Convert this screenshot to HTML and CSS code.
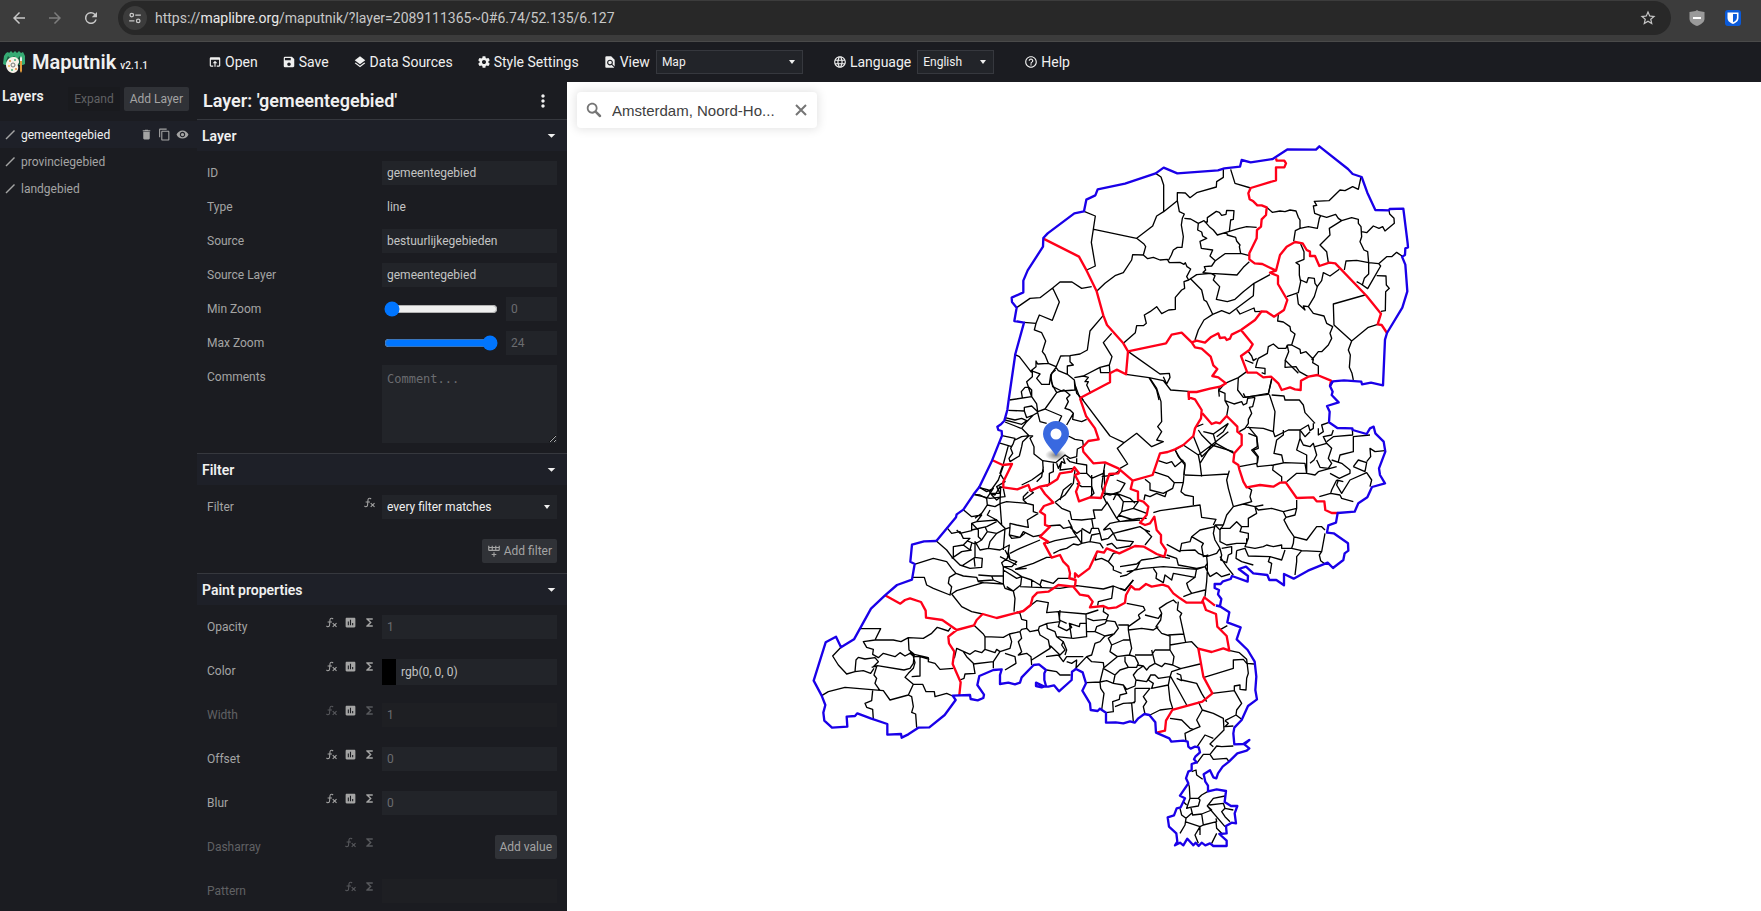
FILE: index.html
```html
<!DOCTYPE html>
<html lang="en">
<head>
    <meta charset="UTF-8">
    <meta name="viewport" content="width=device-width, initial-scale=1.0">
    <title>Maputnik</title>
    <link rel="stylesheet" href="styles.css">
</head>
<body>
    <!-- icon set -->
    <svg class="sprite" aria-hidden="true">
        <symbol id="i-open" viewBox="0 0 24 24"><path d="M19 4H5a2 2 0 0 0-2 2v12a2 2 0 0 0 2 2h4v-2H5V8h14v10h-4v2h4c1.1 0 2-.9 2-2V6a2 2 0 0 0-2-2zm-7 6l-4 4h3v6h2v-6h3l-4-4z"/></symbol>
        <symbol id="i-save" viewBox="0 0 24 24"><path d="M17 3H5a2 2 0 0 0-2 2v14a2 2 0 0 0 2 2h14c1.1 0 2-.9 2-2V7l-4-4zm-5 16c-1.66 0-3-1.34-3-3s1.34-3 3-3 3 1.34 3 3-1.34 3-3 3zm3-10H5V5h10v4z"/></symbol>
        <symbol id="i-layers" viewBox="0 0 24 24"><path d="M11.99 18.54l-7.37-5.73L3 14.07l9 7 9-7-1.63-1.27-7.38 5.74zM12 16l7.36-5.73L21 9l-9-7-9 7 1.63 1.27L12 16z"/></symbol>
        <symbol id="i-settings" viewBox="0 0 24 24"><path d="M19.43 12.98c.04-.32.07-.64.07-.98s-.03-.66-.07-.98l2.11-1.65c.19-.15.24-.42.12-.64l-2-3.46c-.12-.22-.39-.3-.61-.22l-2.49 1c-.52-.4-1.08-.73-1.69-.98l-.38-2.65A.488.488 0 0 0 14 2h-4c-.25 0-.46.18-.49.42l-.38 2.65c-.61.25-1.17.59-1.69.98l-2.49-1c-.23-.09-.49 0-.61.22l-2 3.46c-.13.22-.07.49.12.64l2.11 1.65c-.04.32-.07.65-.07.98s.03.66.07.98l-2.11 1.65c-.19.15-.24.42-.12.64l2 3.46c.12.22.39.3.61.22l2.49-1c.52.4 1.08.73 1.69.98l.38 2.65c.03.24.24.42.49.42h4c.25 0 .46-.18.49-.42l.38-2.65c.61-.25 1.17-.59 1.69-.98l2.49 1c.23.09.49 0 .61-.22l2-3.46c.12-.22.07-.49-.12-.64l-2.11-1.65zM12 15.5c-1.93 0-3.5-1.57-3.5-3.5s1.57-3.5 3.5-3.5 3.5 1.57 3.5 3.5-1.57 3.5-3.5 3.5z"/></symbol>
        <symbol id="i-view" viewBox="0 0 24 24"><path d="M20 19.59V8l-6-6H6a2 2 0 0 0-1.99 2L4 20c0 1.1.89 2 1.99 2H18c.45 0 .85-.15 1.19-.4l-4.43-4.43c-.8.52-1.74.83-2.76.83-2.76 0-5-2.24-5-5s2.24-5 5-5 5 2.24 5 5c0 1.02-.31 1.96-.83 2.75L20 19.59zM9 13c0 1.66 1.34 3 3 3s3-1.34 3-3-1.34-3-3-3-3 1.34-3 3z"/></symbol>
        <symbol id="i-language" viewBox="0 0 24 24"><path d="M11.99 2C6.47 2 2 6.48 2 12s4.47 10 9.99 10C17.52 22 22 17.52 22 12S17.52 2 11.99 2zm6.93 6h-2.95a15.65 15.65 0 0 0-1.38-3.56A8.03 8.03 0 0 1 18.92 8zM12 4.04c.83 1.2 1.48 2.53 1.91 3.96h-3.82c.43-1.43 1.08-2.76 1.91-3.96zM4.26 14C4.1 13.36 4 12.69 4 12s.1-1.36.26-2h3.38c-.08.66-.14 1.32-.14 2s.06 1.34.14 2H4.26zm.82 2h2.95c.32 1.25.78 2.45 1.38 3.56A7.987 7.987 0 0 1 5.08 16zm2.95-8H5.08a7.987 7.987 0 0 1 4.33-3.56A15.65 15.65 0 0 0 8.03 8zM12 19.96c-.83-1.2-1.48-2.53-1.91-3.96h3.82c-.43 1.43-1.08 2.76-1.91 3.96zM14.34 14H9.66c-.09-.66-.16-1.32-.16-2s.07-1.35.16-2h4.68c.09.65.16 1.32.16 2s-.07 1.34-.16 2zm.25 5.56c.6-1.11 1.06-2.31 1.38-3.56h2.95a8.03 8.03 0 0 1-4.33 3.56zM16.36 14c.08-.66.14-1.32.14-2s-.06-1.34-.14-2h3.38c.16.64.26 1.31.26 2s-.1 1.36-.26 2h-3.38z"/></symbol>
        <symbol id="i-help" viewBox="0 0 24 24"><path d="M11 18h2v-2h-2v2zm1-16C6.48 2 2 6.48 2 12s4.48 10 10 10 10-4.48 10-10S17.52 2 12 2zm0 18c-4.41 0-8-3.59-8-8s3.59-8 8-8 8 3.59 8 8-3.59 8-8 8zm0-14c-2.21 0-4 1.79-4 4h2c0-1.1.9-2 2-2s2 .9 2 2c0 2-3 1.75-3 5h2c0-2.25 3-2.5 3-5 0-2.21-1.79-4-4-4z"/></symbol>
        <symbol id="i-delete" viewBox="0 0 24 24"><path d="M6 19c0 1.1.9 2 2 2h8c1.1 0 2-.9 2-2V7H6v12zM19 4h-3.5l-1-1h-5l-1 1H5v2h14V4z"/></symbol>
        <symbol id="i-copy" viewBox="0 0 24 24"><path d="M16 1H4c-1.1 0-2 .9-2 2v14h2V3h12V1zm3 4H8c-1.1 0-2 .9-2 2v14c0 1.1.9 2 2 2h11c1.1 0 2-.9 2-2V7c0-1.1-.9-2-2-2zm0 16H8V7h11v14z"/></symbol>
        <symbol id="i-eye" viewBox="0 0 24 24"><path d="M12 4.5C7 4.5 2.73 7.61 1 12c1.73 4.39 6 7.5 11 7.5s9.27-3.11 11-7.5c-1.73-4.39-6-7.5-11-7.5zM12 17c-2.76 0-5-2.24-5-5s2.24-5 5-5 5 2.24 5 5-2.24 5-5 5zm0-8c-1.66 0-3 1.34-3 3s1.34 3 3 3 3-1.34 3-3-1.34-3-3-3z"/></symbol>
        <symbol id="i-line" viewBox="0 0 24 24"><path d="M3 19L20 2l2 2L5 21z"/></symbol>
        <symbol id="i-more" viewBox="0 0 24 24"><path d="M12 8c1.1 0 2-.9 2-2s-.9-2-2-2-2 .9-2 2 .9 2 2 2zm0 2c-1.1 0-2 .9-2 2s.9 2 2 2 2-.9 2-2-.9-2-2-2zm0 6c-1.1 0-2 .9-2 2s.9 2 2 2 2-.9 2-2-.9-2-2-2z"/></symbol>
        <symbol id="i-down" viewBox="0 0 24 24"><path d="M5 9l7 7 7-7z"/></symbol>
        <symbol id="i-chart" viewBox="0 0 24 24"><path d="M19 3H5c-1.1 0-2 .9-2 2v14c0 1.1.9 2 2 2h14c1.1 0 2-.9 2-2V5c0-1.1-.9-2-2-2zM9 17H7v-7h2v7zm4 0h-2V7h2v10zm4 0h-2v-4h2v4z"/></symbol>
        <symbol id="i-sigma" viewBox="0 0 24 24"><path d="M18 4H6v2l6.5 6L6 18v2h12v-3h-7l5-5-5-5h7z"/></symbol>
        <symbol id="i-fx" viewBox="0 0 24 24"><path d="M12.42 5.29C11.32 5.19 10.35 6 10.25 7.11L10 10H12.82V12H9.82L9.38 17.07C9.18 19.27 7.24 20.9 5.04 20.7C3.79 20.59 2.66 19.9 2 18.83L3.5 17.33C3.83 18.38 4.96 18.97 6 18.63C6.78 18.39 7.33 17.7 7.4 16.89L7.82 12H4.82V10H8L8.27 6.93C8.46 4.73 10.39 3.1 12.6 3.28C13.86 3.39 15 4.09 15.66 5.17L14.16 6.67C13.91 5.9 13.23 5.36 12.42 5.29M22 13.65L20.59 12.24L17.76 15.07L14.93 12.24L13.5 13.65L16.35 16.5L13.5 19.31L14.93 20.72L17.76 17.89L20.59 20.72L22 19.31L19.17 16.5L22 13.65Z"/></symbol>
        <symbol id="i-addrow" viewBox="0 0 24 24"><path d="M22 10A2 2 0 0 1 20 12H4A2 2 0 0 1 2 10V3H4V5H8V3H10V5H14V3H16V5H20V3H22V10M4 10H8V7H4V10M10 10H14V7H10V10M20 10V7H16V10H20M11 14H13V17H16V19H13V22H11V19H8V17H11V14Z"/></symbol>
    </svg>

    <div class="browser-bar">
        <button class="nav-btn" type="button" aria-label="Back">
            <svg class="icon-nav" viewBox="0 0 24 24"><path d="M20 11H7.8l5.6-5.6L12 4l-8 8 8 8 1.4-1.4L7.8 13H20z"/></svg>
        </button>
        <button class="nav-btn nav-btn-off" type="button" aria-label="Forward" disabled>
            <svg class="icon-nav" viewBox="0 0 24 24"><path d="M4 11h12.2l-5.6-5.6L12 4l8 8-8 8-1.4-1.4 5.6-5.6H4z"/></svg>
        </button>
        <button class="nav-btn" type="button" aria-label="Reload">
            <svg class="icon-nav" viewBox="0 0 24 24"><path d="M17.65 6.35A8 8 0 1 0 19.73 14h-2.08A6 6 0 1 1 12 6c1.66 0 3.14.69 4.22 1.78L13 11h7V4z"/></svg>
        </button>
        <div class="url-bar">
            <button class="site-info" type="button" aria-label="Site information">
                <svg class="icon-site" viewBox="0 0 24 24"><g fill="none" stroke="currentColor" stroke-width="2.2"><circle cx="6.5" cy="7" r="3"/><path d="M12.5 7H22M2 17h9"/><circle cx="17.5" cy="17" r="3"/></g></svg>
            </button>
            <span class="url">https://<b>maplibre.org</b>/maputnik/?layer=2089111365~0#6.74/52.135/6.127</span>
            <button class="star" type="button" aria-label="Bookmark">
                <svg class="icon-star" viewBox="0 0 24 24"><path d="M22 9.24l-7.19-.62L12 2 9.19 8.63 2 9.24l5.46 4.73L5.82 21 12 17.27 18.18 21l-1.63-7.03L22 9.24zM12 15.4l-3.76 2.27 1-4.28-3.32-2.88 4.38-.38L12 6.1l1.71 4.04 4.38.38-3.32 2.88 1 4.28L12 15.4z"/></svg>
            </button>
        </div>
        <svg class="ext" viewBox="0 0 16 16"><path fill="#9a9a9a" d="M8 0l1.5 1 6 1v7c0 3-3.5 5.5-7.5 7C4 14.5.5 12 .5 9V2l6-1z"/><path fill="#fff" d="M4 7h8v2H4z"/></svg>
        <svg class="ext" viewBox="0 0 16 16"><rect width="16" height="16" rx="3" fill="#0a5ad9"/><path fill="#fff" d="M2.500 2.500h11V8c0 3-2.500 4.800-5.500 6-3-1.200-5.500-3-5.500-6z"/><path fill="#0a5ad9" d="M8 4v8.300c2.200-1 3.900-2.300 3.900-4.300V4z"/></svg>
    </div>

    <header class="toolbar">
        <a class="brand" href="#">
            <svg class="logo" viewBox="0 0 22 22">
                <path fill="#36ab74" d="M1 5l2-3 2-1 1 1 2-2 2 2 2-2 2 2 2-2 2 2 2-1 2 4v8l-2 1H2l-2-1z"/>
                <path fill="#1b5b40" d="M3 10l2-5 3 3 3-3 3 3 3-3 1 6-2 3H5z"/>
                <path fill="#f6f1e8" d="M10 6c4 0 6 2 6 5 0 2-2 2-1 4 1 3-1 7-5 7s-7-4-7-8 3-8 7-8z"/>
                <circle cx="10" cy="14" r="2" fill="none" stroke="#777"/>
                <circle cx="7" cy="10" r="1" fill="#e8873a"/><circle cx="12" cy="9" r="1" fill="#45b37b"/>
                <circle cx="6" cy="15" r="1" fill="#f0b64a"/><circle cx="9" cy="19" r="1" fill="#45b37b"/><circle cx="13" cy="18" r="1" fill="#e8873a"/>
                <path fill="#e39a3b" d="M17 10h2v10l-1 2-1-2z"/><path fill="#eee" d="M17 7l1-2 1 2v3h-2z"/>
            </svg>
            <span class="brand-name">Maputnik</span>
            <span class="version">v2.1.1</span>
        </a>
        <nav class="actions">
            <button class="action" type="button"><svg class="icon"><use href="#i-open"/></svg>Open</button>
            <button class="action" type="button"><svg class="icon"><use href="#i-save"/></svg>Save</button>
            <button class="action" type="button"><svg class="icon"><use href="#i-layers"/></svg>Data Sources</button>
            <button class="action" type="button"><svg class="icon"><use href="#i-settings"/></svg>Style Settings</button>
            <div class="action action-select">
                <label for="view"><svg class="icon"><use href="#i-view"/></svg>View</label>
                <select id="view" class="select select-view"><option>Map</option></select>
            </div>
            <div class="action action-select">
                <label for="language"><svg class="icon"><use href="#i-language"/></svg>Language</label>
                <select id="language" class="select select-language"><option>English</option></select>
            </div>
            <a class="action action-help" href="#"><svg class="icon"><use href="#i-help"/></svg>Help</a>
        </nav>
    </header>

    <main class="workspace">
        <aside class="layer-list">
            <div class="layer-list-head">
                <h2>Layers</h2>
                <button class="btn btn-faint" type="button">Expand</button>
                <button class="btn" type="button">Add Layer</button>
            </div>
            <ul class="layers">
                <li class="layer layer-selected">
                    <svg class="icon-line"><use href="#i-line"/></svg>
                    <span class="layer-name">gemeentegebied</span>
                    <button type="button" class="layer-btn" aria-label="Delete"><svg class="icon-layer"><use href="#i-delete"/></svg></button>
                    <button type="button" class="layer-btn" aria-label="Duplicate"><svg class="icon-layer"><use href="#i-copy"/></svg></button>
                    <button type="button" class="layer-btn" aria-label="Hide"><svg class="icon-layer"><use href="#i-eye"/></svg></button>
                </li>
                <li class="layer"><svg class="icon-line"><use href="#i-line"/></svg><span class="layer-name">provinciegebied</span></li>
                <li class="layer"><svg class="icon-line"><use href="#i-line"/></svg><span class="layer-name">landgebied</span></li>
            </ul>
        </aside>

        <section class="editor">
            <div class="editor-head">
                <h1>Layer: 'gemeentegebied'</h1>
                <button class="more" type="button" aria-label="More"><svg class="icon-more"><use href="#i-more"/></svg></button>
            </div>

            <button class="group-head" type="button">Layer<svg class="icon-down"><use href="#i-down"/></svg></button>
            <div class="group">
                <div class="row"><label for="id">ID</label><input id="id" class="input" type="text" value="gemeentegebied"></div>
                <div class="row"><span class="label">Type</span><span class="static">line</span></div>
                <div class="row"><label for="source">Source</label><input id="source" class="input" type="text" value="bestuurlijkegebieden"></div>
                <div class="row"><label for="source-layer">Source Layer</label><input id="source-layer" class="input" type="text" value="gemeentegebied"></div>
                <div class="row"><label for="min-zoom">Min Zoom</label>
                    <div class="zoom">
                        <input id="min-zoom" type="range" min="0" max="24" value="0">
                        <input class="input" type="text" placeholder="0" aria-label="Min zoom value">
                    </div>
                </div>
                <div class="row"><label for="max-zoom">Max Zoom</label>
                    <div class="zoom">
                        <input id="max-zoom" type="range" min="0" max="24" value="24">
                        <input class="input" type="text" placeholder="24" aria-label="Max zoom value">
                    </div>
                </div>
                <div class="row"><label for="comments">Comments</label><textarea id="comments" class="input textarea" placeholder="Comment..."></textarea></div>
            </div>

            <button class="group-head" type="button">Filter<svg class="icon-down"><use href="#i-down"/></svg></button>
            <div class="group group-filter">
                <div class="row">
                    <label for="filter">Filter</label>
                    <div class="tools"><button type="button" aria-label="Expression"><svg class="icon-tool"><use href="#i-fx"/></svg></button></div>
                    <select id="filter" class="input select select-filter"><option>every filter matches</option></select>
                </div>
                <button class="btn btn-right" type="button"><svg class="icon-add"><use href="#i-addrow"/></svg>Add filter</button>
            </div>

            <button class="group-head" type="button">Paint properties<svg class="icon-down"><use href="#i-down"/></svg></button>
            <div class="group group-paint">
                <div class="row">
                    <label for="opacity">Opacity</label>
                    <div class="tools">
                        <button type="button" aria-label="Zoom function"><svg class="icon-tool"><use href="#i-fx"/></svg></button>
                        <button type="button" aria-label="Data function"><svg class="icon-tool"><use href="#i-chart"/></svg></button>
                        <button type="button" aria-label="Expression"><svg class="icon-tool"><use href="#i-sigma"/></svg></button>
                    </div>
                    <input id="opacity" class="input" type="text" placeholder="1">
                </div>
                <div class="row">
                    <label for="color">Color</label>
                    <div class="tools">
                        <button type="button" aria-label="Zoom function"><svg class="icon-tool"><use href="#i-fx"/></svg></button>
                        <button type="button" aria-label="Data function"><svg class="icon-tool"><use href="#i-chart"/></svg></button>
                        <button type="button" aria-label="Expression"><svg class="icon-tool"><use href="#i-sigma"/></svg></button>
                    </div>
                    <div class="color-field"><span class="swatch"></span><input id="color" class="input" type="text" value="rgb(0, 0, 0)"></div>
                </div>
                <div class="row row-off">
                    <label for="width">Width</label>
                    <div class="tools">
                        <button type="button" aria-label="Zoom function"><svg class="icon-tool"><use href="#i-fx"/></svg></button>
                        <button type="button" class="tool-on" aria-label="Data function"><svg class="icon-tool"><use href="#i-chart"/></svg></button>
                        <button type="button" aria-label="Expression"><svg class="icon-tool"><use href="#i-sigma"/></svg></button>
                    </div>
                    <input id="width" class="input" type="text" placeholder="1">
                </div>
                <div class="row">
                    <label for="offset">Offset</label>
                    <div class="tools">
                        <button type="button" aria-label="Zoom function"><svg class="icon-tool"><use href="#i-fx"/></svg></button>
                        <button type="button" aria-label="Data function"><svg class="icon-tool"><use href="#i-chart"/></svg></button>
                        <button type="button" aria-label="Expression"><svg class="icon-tool"><use href="#i-sigma"/></svg></button>
                    </div>
                    <input id="offset" class="input" type="text" placeholder="0">
                </div>
                <div class="row">
                    <label for="blur">Blur</label>
                    <div class="tools">
                        <button type="button" aria-label="Zoom function"><svg class="icon-tool"><use href="#i-fx"/></svg></button>
                        <button type="button" aria-label="Data function"><svg class="icon-tool"><use href="#i-chart"/></svg></button>
                        <button type="button" aria-label="Expression"><svg class="icon-tool"><use href="#i-sigma"/></svg></button>
                    </div>
                    <input id="blur" class="input" type="text" placeholder="0">
                </div>
                <div class="row row-off">
                    <span class="label">Dasharray</span>
                    <div class="tools">
                        <button type="button" aria-label="Zoom function"><svg class="icon-tool"><use href="#i-fx"/></svg></button>
                        <button type="button" aria-label="Expression"><svg class="icon-tool"><use href="#i-sigma"/></svg></button>
                    </div>
                    <div class="field"><button class="btn btn-right" type="button">Add value</button></div>
                </div>
                <div class="row row-off">
                    <label for="pattern">Pattern</label>
                    <div class="tools">
                        <button type="button" aria-label="Zoom function"><svg class="icon-tool"><use href="#i-fx"/></svg></button>
                        <button type="button" aria-label="Expression"><svg class="icon-tool"><use href="#i-sigma"/></svg></button>
                    </div>
                    <input id="pattern" class="input" type="text">
                </div>
            </div>
        </section>

        <section class="map">
            <svg class="map-canvas" viewBox="567 82 1194 829" role="img" aria-label="Map of the Netherlands">
                <defs>
                    <radialGradient id="shadow"><stop offset="0" stop-opacity=".5"/><stop offset="1" stop-opacity="0"/></radialGradient>
                </defs>
                <!-- municipalities -->
                <g class="gemeente">
                    <path transform="translate(980 130) scale(.33333)" d="M527 130L543 141 551 165 551 245 530 258 518 288 470 325 342 298M551 245L592 212 592 188 616 189 630 203 650 188 709 171 710 155 730 142 730 115M312 244L346 258 334 337 346 408 320 420M592 212L598 245 613 252 607 265 604 285 610 320 606 352 592 352 580 360 574 375 566 390M470 325L492 342 497 350 490 375 458 374 455 390 430 428 405 437 375 460 350 484M490 375L503 386 520 382 540 390 562 388 568 398 600 397 612 403 616 398 621 410 632 417 620 440 626 450 612 455 614 475 605 480 586 502 586 538 566 540 545 551 530 530 510 545 493 555 499 580 490 587 470 587 466 608 430 640M613 265L632 267 655 280 653 300 665 306 668 318 680 325 660 334 664 355 698 360 690 378 706 392 695 408 673 410 677 420 668 428M655 280L672 272 688 290 700 300 712 315 748 304 775 296 800 290 830 292M672 275L682 276 682 263 709 244 718 247 725 256 738 253 740 241 762 242 760 268 752 270 748 304M740 306L742 315 767 322 770 333 780 345 778 350 782 370 808 377M706 392L735 371 782 370M668 428L693 430 771 435 790 412 808 395M626 450L650 434 693 430 705 437 700 450 719 470 709 508 742 515 765 508 790 485 822 460 870 434M822 460L820 497 790 520 748 551 725 542 698 553 672 570 655 600 645 630M630 445L665 480 672 510 680 515 698 553M770 538L780 552 822 534 825 545 845 544M752 118L765 160 812 174M860 232L877 247 900 243 915 245 930 240 948 243 955 262 960 270 960 295 985 290 1012 295 1018 265 1022 257 1004 250 1000 228 1010 226 1003 214 1047 212 1080 180 1095 182 1118 170 1135 178 1143 141M960 295L946 302 941 334M1022 257L1040 262 1067 253 1075 265 1085 272 1115 263 1135 268 1135 280 1143 290 1145 320 1140 335 1152 360 1163 365 1166 398M1085 272L1048 295 1050 315 1020 345 1040 365 1045 398M1145 305L1160 308 1180 288 1197 295 1208 290 1215 303 1243 280 1242 265 1229 252 1227 241M1166 398L1196 401 1220 380 1235 380 1250 367 1266 378M1093 420L1098 393 1130 391 1166 398 1166 432 1153 445 1147 465M1196 401L1202 408 1175 455 1163 476 1143 462 1130 455M1190 437L1218 438 1219 465 1228 475 1217 485 1216 542 1203 544M962 342L972 365 972 388 948 398 958 405 958 435 962 455 955 488 920 500M962 450L980 458 985 443 1003 445 1005 460 1012 470 1003 500 985 530 970 528 975 540 955 522 951 490M1078 418L1050 438 1030 428 1025 452 1010 472M1155 495L1060 522 1062 585 1115 633 1165 592 1193 583M985 530L1000 550 1032 558 1040 580 1058 590 1050 610 1055 625 1045 645 1025 665 1015 665 995 690M895 555L893 573 910 576 930 590 932 602 945 612 935 645 922 645M1115 633L1105 660 1111 675 1108 712 1116 730 1120 750M922 645L918 655 895 655 880 642 865 650 862 670 835 685 830 700 827 712 855 715 855 732 845 728M922 648L926 665 916 690 915 712 948 710 958 725 985 740M935 645L960 658 962 670 978 665 1000 688 998 698 1015 708 1015 735M805 665L815 678 820 692 830 685M444 664L540 732 568 730 570 742 560 762 550 740M438 733L507 743 550 752 572 780 626 784M507 743L530 780 537 810M718 800L716 782 735 760 775 743 800 725M775 743L773 780 790 802 865 793 875 745M103 673L118 680 132 698 155 728M110 533L150 505 180 503 218 474 240 456 276 456 305 475 335 470M218 474L238 516 217 571 178 555 168 580 132 577M168 580L163 600 185 608 197 633 187 665 195 675 205 700 228 710M370 556L330 603 322 660 300 672 270 677 242 678 228 712M395 610L370 638 396 680 388 705 390 730M205 700L173 702 168 693 168 710 153 722 180 732 170 745 185 763 208 763 212 735 228 712M270 677L270 695 280 705 262 708 262 733 235 722 228 712M212 735L218 770 245 783 285 780 283 750 262 733M283 743L310 738 360 712 388 705M360 712L362 728 390 728M310 738L325 742 315 755 325 755 320 765 332 790M283 750L290 790 310 810"/>
                    <path transform="translate(890 330) scale(.33333)" d="M427 120L427 140 410 155 415 170 425 180 425 200 440 222 443 245 465 237 500 188M397 203L394 185 405 172 415 172 425 200 358 210M355 241L403 243 403 232 425 228 443 245M403 243L410 263 430 255 443 248 450 275 470 280M465 237L515 258 505 280M345 263L375 270 395 265 410 272 395 283 345 270M345 276L393 295M430 255L410 275 395 295 417 317 428 318 420 325 432 350 432 372 458 392 497 398 525 375 540 385 560 380 562 357 580 348 578 332 555 328 535 318M336 317L375 325 370 340 362 355 368 370 357 385 360 395 388 378 395 350 398 335 417 317M417 317L395 320 375 330M325 338L355 347 340 402M355 347L365 350M500 188L522 180 540 195 530 205 535 215 525 235 540 240 550 250 530 285M555 165L570 205M550 250L548 268 575 275 590 268M458 392L460 425 425 450 395 465M460 410L455 440 440 455M490 400L490 425 478 430 478 460 470 470M500 400L505 415 515 395 525 400 520 385M530 385L540 395 560 400 560 385M515 395L510 420 550 415M560 400L590 405 590 430 560 430M590 430L605 445 640 430 645 400M605 435L605 470 612 490 600 500M545 460L520 480 510 510M640 430L635 470 640 490 660 495 690 485 705 460 680 450M690 420L670 435 635 440M340 402L330 430 345 455 320 470 330 490 300 490 310 475 290 485 265 470M342 402L325 450 300 485M250 493L300 505 345 500 340 475M415 485L400 500 400 510M500 188L490 170 482 150 485 130 497 120"/>
                    <path transform="translate(900 470) scale(.33333)" d="M43 283L100 265 140 275 155 295 168 310 148 322 145 340 155 350 150 375 100 355 80 345 73 322 37 322M168 310L190 318 230 322 235 335 250 338 210 350 170 362 155 372 185 410 215 425 248 432M250 338L310 342 315 355 340 363 345 385 342 425M235 315L275 318 280 330 235 333M275 318L310 318 310 342 280 330M310 318L310 290 335 300 365 320 362 345 340 363 320 350M310 300L350 325 365 320 395 330 395 350M395 330L420 345 425 330 460 340 475 325 500 325 520 325M420 345L425 352M360 350L480 355 530 347 610 357 640 348 675 362 700 330M640 348L635 385 595 395 593 407M310 290L305 278 322 265 325 245 330 268 350 275 335 290 310 290M300 260L350 285M315 240L330 268M345 298L400 280 440 262 460 262M345 298L380 295M109 213L140 240 155 260 180 285 210 295 245 292 247 265 225 262 225 215 240 240 265 235 300 240 328 225 325 245M155 265L185 245 215 240M225 262L185 288M222 262L225 290M140 172L155 190 180 185 190 205 210 205 190 225 160 230 160 260M190 119L215 140 245 135 230 155 215 160 215 182 180 190 170 180M215 160L235 180 235 200 245 210 225 222 200 212M190 225L210 240 215 220M221 73L240 75 260 85 270 70 285 75 300 50 310 52M236 52L265 60 275 75M260 85L262 105 245 130 225 145M262 105L285 110 302 100M275 75L290 90 302 80M302 50L300 100 305 165 315 175 310 240M302 100L320 95 380 100 370 90 400 68 387 60M230 155L290 150 305 165M215 180L260 170 290 155M270 120L262 135 290 150M265 235L270 215 290 190 313 178 330 172 330 160 350 165 385 172 382 150 415 130M290 190L262 185 245 210M262 185L255 170M330 172L328 195 360 202 370 185 400 200 425 195M328 195L335 205 360 202 375 190M330 250L360 235 420 210M380 100L400 105 400 125 415 130M465 97L495 75 520 40 525 0M465 97L485 115 510 125 515 148 545 150 585 145 580 120 605 120 620 100 610 80 620 70 655 75 670 95 665 125 650 145 632 115 620 95M440 168L480 165 490 175 515 170 505 150M515 170L520 185 545 220 535 225 520 222 500 235 480 240 460 250M440 220L465 212 500 205 530 200M510 172L530 190 545 180 545 220 570 215 575 195 600 190 595 175 575 175 570 190 545 175M575 145L580 175M600 190L605 210 625 205 640 190 630 175 610 180M640 190L650 210 700 215 690 228 650 235 635 220 620 225M570 215L600 220 610 235M610 180L630 160 655 155 720 150M650 145L660 155 715 145 740 145M655 135L700 150M670 95L715 95 700 115 665 125M700 115L740 130M640 190L680 180 720 170 735 180 755 200 735 225M735 180L750 185M530 40L545 50 575 50 575 80M615 70L612 0M640 90L650 70 690 85 705 100M590 250L585 270 605 265 625 275 640 250 650 248M625 275L640 290 640 300 665 310M480 420L478 450 500 460"/>
                    <path transform="translate(1120 430) scale(.33333)" d="M100 248L120 242 240 225 245 262 288 268 280 285M75 148L90 160 90 180 130 190 158 175 163 158 145 140 100 125M163 158L190 157 195 100 180 85 165 60M190 90L165 110 155 95 140 100 115 92M195 135L242 137 325 132 328 122M165 60L190 45 235 75 240 100 245 140M235 75L275 45 245 15 235 0M240 100L275 45 340 65M275 45L325 5M190 157L183 185 195 195 220 200 220 225M325 132L320 150 325 175 340 230 320 255 310 285 285 285M340 230L370 222 395 215 390 200 395 180 380 170M370 222L405 230 430 225M72 210L75 195 90 200 110 190 135 200 140 185M310 285L300 300 285 285M300 300L300 335 320 345 350 340 380 340 380 325M285 285L280 310 285 330 300 355M300 295L330 295 350 275 365 290 385 290 385 265 410 250 405 230M405 230L415 240 455 235 490 245 498 262 492 270 505 295 522 320 520 340 515 355M490 245L530 235 530 210M498 262L525 255 530 235M520 320L560 330 590 290 605 290 615 300M515 355L545 362 605 365 615 310M545 362L530 380 530 395 525 435M605 365L598 375 602 392 615 402M365 290L360 305 385 310 385 325 375 350 405 355 430 350 440 345 460 350 485 345 485 355 515 355M350 362L375 355 385 378 450 380 445 395 455 400 450 432M350 362L348 385 365 395 400 405M450 380L485 390 495 360M305 355L335 350 335 370 325 375 320 398 302 390 305 375 300 355 290 370 260 380 262 400 255 410 270 440M300 380L320 410 340 435M270 440L290 428 305 440 330 432M255 410L230 415 175 405 170 385 140 375M265 375L250 380 245 350 250 340 215 320 210 335 185 340 180 365 140 343M180 362L225 360 235 370 260 380M215 320L240 300 285 290M0 410L50 402 65 390 100 385 120 380 150 385M20 425L70 415 130 410 230 418 255 410M100 415L110 430 108 445 130 458 135 435 155 450 160 430 225 442 230 415M225 442L200 460 205 475 215 490 255 480M262 400L262 420 260 455 255 500M0 440L20 435 50 415 60 395M190 500L215 490M0 475L15 480 40 450M358 110L410 100 412 110 460 105 495 98 555 100 560 130 530 130 500 155M412 100L412 80 395 60 412 50 410 20 385 10M460 105L458 120 485 140 485 155M490 98L485 75 462 70 470 30 490 15 490 0M540 0L540 25 550 45 570 50 580 40 590 75 582 90 570 100M540 25L530 60 560 75 560 110 560 130 585 135 595 125 650 110M585 50L620 40 635 55 625 85 635 100 625 115 600 112 590 90M620 40L610 20 635 15 640 0M635 90L665 100 690 120 690 130 658 145 630 130M655 95L660 75 700 65 700 20 750 15M700 110L715 90 740 98 735 125 700 110M740 95L752 80 750 55 765 65 795 62M650 150L635 180 632 190 598 200M655 150L650 165 665 190 690 150 740 128 755 150 750 170M632 190L660 195 665 205 700 215M650 150L670 155"/>
                    <path transform="translate(980 360) scale(.33333)" d="M718 80L716 92 735 100 735 122 762 132 785 125 790 135 800 130 803 115 825 112M825 112L818 140 808 142 815 160 805 178 805 190 795 205 778 215M790 100L796 112 865 100 875 60M868 103L885 155 880 215 850 205 800 202M875 105L912 108 915 120 958 120 970 135 975 158 1005 190M880 215L885 230 925 210 960 210 985 195 990 212 1000 205 1000 190M1047 187L1025 195 1030 215 1015 225 1015 205M960 210L975 230 990 215M740 168L745 140 735 122M805 200L830 230 835 265 820 270 835 290 832 310M1117 205L1118 225 1060 230 1040 245M670 192L650 200M670 215L700 222 745 190M700 222L708 250 762 280M640 228L665 290 708 250M745 190L730 215 710 230M585 268L595 290 615 315 612 345M390 228L432 248 470 220 515 260 550 245 530 240 545 215 533 200 545 185 543 125 530 85 510 55M305 115L390 228M432 248L412 265 443 312 420 325M795 0L820 10M915 0L955 40"/>
                    <path transform="translate(800 560) scale(.33333)" d="M180 206L242 206 225 240 190 245 200 262 220 268 218 283 235 293 250 280 285 290 300 278 315 288 330 280 342 290 340 310 330 325 312 330 232 317 215 322M225 240L280 240 303 245 325 233 370 235 395 220 412 202 445 213 452 203M325 233L327 270 343 283 385 293 385 305 405 310 420 328 460 325M330 275L345 290 360 290 360 348 335 350M360 290L388 298M123 262L98 288 115 315 140 342 165 335 190 332 212 340 222 325M165 335L168 300 175 292 195 297 225 293 235 305 220 320 230 320 222 345 230 355 225 370 240 392M65 407L85 395 135 382 250 392 270 420 325 405 340 373 315 352 325 340 340 325 345 308 340 290M218 392L215 422 195 430 200 442 218 448 220 478M325 405L335 410 340 440 335 457 347 462 350 503M338 373L368 373 378 395 403 395 405 410 440 400 458 408M522 196L550 222 555 230 555 268 545 278 525 272 510 283 470 265 463 295M490 275L500 290 520 310 525 340 495 342 492 355 480 360M555 230L610 232 628 222 635 245 630 265 600 275 590 268 585 278 555 268M520 312L580 305 590 290 600 275M580 305L580 325M615 280L645 290 648 310 615 330M628 222L660 215 665 235 655 245 665 275 655 285 680 280 693 290 695 315M650 155L660 160 665 178 680 182 680 205 665 208 660 215M680 205L690 215 715 210 718 200 742 190 780 185 775 155 740 158 745 128 710 122 670 153M715 210L720 225 745 240 750 265 730 278 695 300M775 155L858 162 860 230 820 235 770 230 765 215 742 205 740 190M780 182L775 200 800 212 815 202 808 190 838 200 840 190 858 190M808 190L815 235M770 230L790 245 785 255 795 270 780 285 752 258 750 265M738 290L775 285 790 305 800 290 850 290M790 245L800 270 795 285M800 305L815 310 830 300 828 325M740 330L770 335 780 345 812 345M858 162L895 150M862 175L880 182 920 178 925 165 910 155 912 140M860 215L885 215 890 200 915 190 920 182 945 185 955 205 942 222 915 228 885 215M955 195L985 195 985 210M915 228L900 245 885 250 875 285 860 290 825 327M942 222L925 235 935 255 930 275 952 290 910 325 900 366 858 368M860 290L875 305 910 308 912 325M935 255L970 240 990 240 985 210 1025 205 1060 210 1075 200M1015 165L1035 150 1030 140 980 130M1015 165L1020 175 985 200M1035 165L1075 175 1085 160 1078 145 1100 130 1120 120 1130 130M1085 160L1082 180 1068 200 1085 220 1110 228 1110 255M1135 125L1132 150 1145 160 1140 170 1157 247 1110 255M1157 247L1175 245 1195 266M1105 225L1152 222M990 240L995 265 988 285 950 290M988 285L1005 290 1015 310 1010 322 985 322 975 305 975 290M1005 285L1035 285 1055 285 1065 270 1110 270 1110 255M1055 270L1065 310 1048 320 1040 330 1030 318 1012 315M1110 270L1122 290 1118 315 1095 310 1085 320 1065 310M1118 315L1140 325 1145 325 1200 312M910 325L945 345 960 330 985 322M945 345L940 370 920 362 900 366 902 385 912 400 905 450M940 370L970 375 980 388 1005 378 1008 360 1000 345 1012 330 1030 318M1008 360L1040 365 1052 345 1065 345 1075 355 1110 350 1115 335 1145 325M1052 345L1045 360 1060 370 1055 385 1105 375 1110 350M1005 385L1050 385 1030 410 1040 425 1030 440 1035 462M1005 385L1005 425 995 430 1000 485M970 375L980 400 960 405 958 418 938 425 940 455 918 458M1005 428L970 430 945 440M1105 375L1110 420 1118 445 1080 450 1050 465M1112 350L1135 390 1160 435M1145 360L1190 370 1205 400 1220 425M1130 355L1145 362 1142 345 1130 340M1212 352L1300 325 1300 300 1330 298 1340 310 1362 312M1290 272L1318 278 1340 298 1345 340 1340 355 1338 390 1320 388 1320 375 1303 378 1303 392 1237 400M1303 392L1325 430 1310 450 1308 465 1275 482M1195 425L1207 450 1190 480 1200 500 1180 508 1170 505 1145 480 1110 475M1180 508L1155 520 1158 545M1207 450L1240 460 1270 475 1272 510 1230 552 1240 560M1275 482L1285 490 1275 500 1300 498M1308 465L1325 478M1190 562L1215 525 1240 535M1300 558L1265 560 1250 558 1230 583 1210 583 1190 610M1230 583L1240 598 1280 595 1287 605M1175 635L1188 630 1190 645 1208 658M1165 670L1168 680 1170 715 1195 715 1205 705 1224 694M1170 715L1160 745 1170 742 1195 738 1200 720 1195 715M1172 740L1178 765 1205 762 1235 750 1222 738 1240 715 1275 708M1150 725L1160 735M1140 745L1145 765 1158 775 1175 760M1205 762L1210 795 1250 785 1248 775M1158 775L1155 795 1140 820M1155 785L1200 800 1185 825 1195 850M1210 795L1200 800 1200 825M1248 785L1250 805 1265 820M1222 738L1275 800M1228 735L1270 730 1275 745 1265 755 1275 770 1290 785M1275 745L1300 750M1235 850L1250 820M1262 208L1282 197"/>
                </g>
                <!-- provinces -->
                <g class="provincie">
                    <path transform="translate(980 130) scale(.33333)" d="M190 326L297 380 320 422 350 484 370 556 381 585 430 640 444 664 438 733 410 719 390 730 390 757 299 805M888 85L890 92 913 92 918 100 913 112 888 112 888 151 812 174 805 190 809 208 820 214 832 226 845 226 860 232 858 255 845 268 843 290 831 300 830 325 808 370 808 388 824 400 847 402 888 422 870 428 894 438 894 462 922 510 912 540 882 560 860 545 845 544 825 570 783 600 755 614 750 626 740 630 735 622 720 624 715 610 692 622 675 638 650 632 635 637 605 608 575 614 558 640 444 664M888 422L900 375 920 350 945 336 968 340 980 360 990 365 990 378 1005 378 1018 408 1048 398 1066 400 1160 498 1203 551 1193 583 1205 585 1221 609M635 637L645 652 665 656 692 680 700 706 712 717 697 738 715 742 738 760 720 770 690 776 650 786 626 786 627 810M783 600L818 643 808 660 783 678 802 728 830 728 850 742 873 740 895 760 905 780 930 772 945 778 962 780 963 752 985 740 1012 735 1053 752 1050 768"/>
                    <path transform="translate(980 360) scale(.33333)" d="M626 95L627 112 645 118 665 150 663 175 645 205 640 228 610 255 585 268 563 276 540 280 518 345 458 362 415 325 375 307 340 310 310 275 308 262 325 243 356 238 345 205 318 168 300 115M667 160L695 192 708 187 720 190 740 168 772 200 772 215 785 225 785 255 763 280 760 305 775 315 778 328 790 365 800 382 840 375 880 380 900 368 917 367 950 414 1000 412 1010 424 1033 424 1036 450 1055 459 1075 459M36 300L68 315 96 312 70 365 70 382 112 388 145 375 152 392 180 380 205 375 232 358 240 340 275 335 283 322 297 340 285 345 298 370 288 395 297 424 330 412 363 414 388 342 415 340 420 330M180 380L195 402 220 428 192 438 180 455 195 465 195 495 210 500 180 530 205 545 192 550 215 593 240 585 250 605 265 620 270 640 268 655 287 660 285 680M458 362L452 387 474 395 474 420 490 425 505 440 500 465 480 488 495 495 510 490 523 470 530 510 543 525 543 548 558 570 553 590 530 582 492 560 465 558 418 580 380 565 372 578 352 574 328 625 295 650 285 640 285 655"/>
                    <path transform="translate(800 560) scale(.33333)" d="M255 106L301 131 315 120 330 115 363 126 377 152 378 173 427 180 470 210 522 196 530 180 548 162 590 174 670 153 692 135 698 112 712 98 745 95 775 75 820 80 840 104 865 108 878 125 870 142 910 138 925 145 950 142 975 128 978 105 993 78 1005 88 1018 88 1038 72 1055 80 1088 74 1105 80 1120 100 1140 115 1160 128 1205 128 1213 112 1245 137M470 210L445 230 447 250 463 275 458 312 482 367 478 405M1207 120L1218 150 1248 162 1252 200 1280 228 1288 272 1270 265 1235 276 1195 266 1210 350 1237 400 1207 425 1117 450 1098 482 1095 512 1070 518"/>
                </g>
                <!-- national border -->
                <g class="land">
                    <path transform="translate(980 130) scale(.33333)" d="M86 810L106 672 132 578 103 573 110 533 96 516 95 503 130 487 130 452 143 421 189 350 190 324 203 310 283 250 312 244 319 209 346 196 353 178 435 161 527 130 551 113 592 130 714 121 733 115 780 110 785 90 812 97 878 87 923 58 1008 59 1018 49 1104 117 1118 132 1145 141 1162 188 1186 240 1227 241 1229 237 1270 236 1283 340 1284 352 1276 355 1275 375 1266 380 1276 404 1282 484 1267 533 1221 609 1215 629 1209 766 1173 758 1146 763 1144 755 1092 751 1058 754 1050 768"/>
                    <path transform="translate(980 360) scale(.33333)" d="M1058 64L1050 78 1058 95 1055 105 1076 127 1041 138 1049 155 1047 187 1072 204 1117 205 1118 210 1160 222 1170 205 1181 200 1186 220 1211 245 1216 275 1197 325 1200 345 1215 370 1176 381 1162 412 1135 430 1124 455 1073 459 1068 488 1045 496 1041 518 1061 520 1104 550 1105 572 1094 580 1090 600 1059 624 1043 608 984 632 941 656 912 642 912 676 889 660 868 660 862 645 820 640 798 620 776 627 804 648 803 665 756 648 752 657 729 664 722 672 704 672 704 684 717 690 714 703 724 717 720 738 708 737"/>
                    <path transform="translate(800 560) scale(.33333)" d="M1248 137L1262 140 1288 157 1282 187 1322 202 1310 238 1343 270 1364 305 1369 350 1366 390 1371 418 1344 438 1325 480 1303 503 1300 520 1303 553 1330 552 1348 540 1333 553 1348 565 1340 572 1312 580 1287 605 1268 620 1254 640 1249 655 1240 652 1230 631 1211 643 1216 665 1224 677 1224 694 1250 688 1278 693 1274 726 1293 738 1312 738 1304 760 1308 790 1295 788 1278 798 1280 820 1258 822 1280 842 1280 858 1240 858 1230 850 1216 856 1205 848 1196 858 1187 848 1180 856 1162 836 1150 856 1140 848 1125 856 1132 845 1129 820 1107 800 1103 772 1122 766 1130 745 1142 742 1155 715 1140 707 1165 670 1158 655 1165 635 1175 630 1175 612 1190 607 1182 598 1186 590 1200 577 1196 562 1185 560 1172 566 1165 560 1163 545 1150 542 1114 545 1108 535 1068 518 1066 487 1048 465 1033 462 1015 475 1004 488 990 484 970 490 947 487 918 488 918 458 900 446 893 453 872 450 870 430 847 392 858 370 848 337 828 327 816 335 815 360 777 394 762 376 745 380 733 380 708 368 708 378 725 382 738 378 733 360 733 340 738 330 717 313 701 315 665 352 660 368 645 373 625 368 600 372 600 345 605 328 580 330 538 348 532 375 552 404 550 414 533 421 512 417 510 405 458 407 467 420 434 465 388 502 355 503 325 523 305 533 303 522 262 524 262 492 214 476 172 460 165 468 140 470 142 500 96 503 73 482 70 458 76 435 65 407 41 362 77 247 108 230 123 262 162 238 213 146 255 106 291 75 336 59 344 12 331 5 336 -46 372 -56 409 -57"/>
                    <path transform="translate(890 330) scale(.33333)" d="M139 633L198 562 200 553 220 539 251 493 268 471 306 392 336 317 335 303 325 300 322 290 333 283 343 272 352 240 356 210"/>
                </g>
                <!-- marker -->
                <ellipse cx="1056" cy="455" rx="11" ry="6" fill="url(#shadow)"/>
                <path fill="#3969e0" d="M1056 456c-3-6-13-14-13-22a13 13 0 0 1 26 0c0 8-10 16-13 22z"/>
                <circle cx="1056" cy="434" r="5.5" fill="#fff"/>
            </svg>
            <form class="search">
                <svg class="icon-search" viewBox="0 0 18 18"><path d="M7.4 2.5c-2.7 0-4.9 2.2-4.9 4.9s2.2 4.9 4.9 4.9c1 0 1.8-.2 2.5-.8l3.7 3.7c.2.2.4.3.8.3.7 0 1.1-.5 1.1-1.1 0-.3-.1-.5-.3-.8L11.4 10c.4-.8.8-1.6.8-2.5.1-2.8-2.1-5-4.8-5zm0 1.6c1.8 0 3.2 1.4 3.2 3.2s-1.4 3.2-3.2 3.2-3.3-1.3-3.3-3.1 1.4-3.3 3.3-3.3z"/></svg>
                <input class="search-input" type="text" aria-label="Search" value="Amsterdam, Noord-Ho...">
                <button class="search-clear" type="button" aria-label="Clear"><svg class="icon-clear" viewBox="0 0 14 14"><path d="M2 2l10 10M12 2L2 12"/></svg></button>
            </form>
        </section>
    </main>
</body>
</html>
```

FILE: styles.css
```css
* {
    box-sizing: border-box;
}
body {
    margin: 0;
    height: 100vh;
    display: flex;
    flex-direction: column;
    overflow: hidden;
    background: #1b1c21;
    color: #f0f0f0;
    font-family: Roboto, sans-serif;
    font-size: 12px;
}
button, input, select, textarea {
    font: inherit;
    color: inherit;
}
button {
    background: none;
    border: 0;
    padding: 0;
}
a {
    color: inherit;
    text-decoration: none;
}
svg {
    display: block;
    flex: none;
    fill: currentColor;
}
.sprite {
    display: none;
}

/* browser bar */
.browser-bar {
    flex: none;
    display: flex;
    align-items: center;
    height: 42px;
    padding: 1px 20px 6px 10px;
    background: #3c3c3c;
    border-bottom: 1px solid #4a4a4a;
    color: #c7c7c7;
}
.nav-btn {
    margin-right: 18px;
}
.nav-btn-off {
    color: #7d7d7d;
}
.icon-nav {
    width: 18px;
    height: 18px;
}
.url-bar {
    flex: 1;
    display: flex;
    align-items: center;
    height: 34px;
    margin-right: 18px;
    padding: 0 14px 0 5px;
    border-radius: 17px;
    background: #282828;
}
.site-info {
    display: flex;
    align-items: center;
    justify-content: center;
    width: 24px;
    height: 24px;
    margin-right: 8px;
    border-radius: 50%;
    background: #3c3c3c;
}
.icon-site {
    width: 14px;
    height: 14px;
}
.url {
    flex: 1;
    font-size: 14px;
}
.url b {
    font-weight: 400;
    color: #e8e8e8;
}
.icon-star {
    width: 18px;
    height: 18px;
}
.ext {
    width: 16px;
    height: 16px;
}
.ext + .ext {
    margin-left: 20px;
}

/* toolbar */
.toolbar {
    flex: none;
    display: flex;
    align-items: center;
    height: 40px;
}
.brand {
    display: flex;
    align-items: baseline;
    width: 196px;
    padding-left: 3px;
}
.logo {
    align-self: center;
    width: 22px;
    height: 22px;
    margin-right: 7px;
}
.brand-name {
    font-size: 20px;
    font-weight: 600;
}
.version {
    margin-left: 4px;
    font-size: 10px;
    font-weight: 500;
}
.actions {
    display: flex;
    align-items: center;
}
.action {
    display: flex;
    align-items: center;
    padding: 0 12px;
    font-size: 14px;
}
.action-select {
    padding-right: 18px;
}
.action-select label {
    display: flex;
    align-items: center;
    margin-right: 6px;
}
.icon {
    width: 14px;
    height: 14px;
    margin-right: 3px;
}
.select {
    appearance: none;
    height: 24px;
    padding: 0 5px;
    border: 1px solid #36383e;
    border-radius: 0;
    background: #222429 url("data:image/svg+xml,%3Csvg xmlns='http://www.w3.org/2000/svg' width='8' height='4'%3E%3Cpath fill='%23f0f0f0' d='M1 0h6L4 4z'/%3E%3C/svg%3E") no-repeat right 6px center;
    font-size: 12px;
}
.select-view {
    width: 147px;
}
.select-language {
    width: 77px;
}

/* panels */
.workspace {
    flex: 1;
    min-height: 0;
    display: flex;
}
.layer-list {
    flex: none;
    width: 197px;
}
.layer-list-head {
    display: flex;
    align-items: flex-start;
    gap: 4px;
    height: 39px;
    padding: 5px 8px 0 2px;
}
.layer-list-head h2 {
    flex: 1;
    margin: 0;
    font-size: 14px;
    line-height: 18px;
    font-weight: 600;
}
.btn {
    display: flex;
    align-items: center;
    height: 24px;
    padding: 0 5px;
    border-radius: 2px;
    background: #303237;
    color: #a4a4a4;
}
.layer-list-head .btn {
    padding: 0 6px;
}
.btn-faint {
    background: #191a1e;
    color: #606164;
}
.btn-right {
    margin-left: auto;
}
.layers {
    margin: 0;
    padding: 0;
    list-style: none;
}
.layer {
    display: flex;
    align-items: center;
    height: 27px;
    padding: 0 8px 0 4px;
    color: #a4a4a4;
}
.layer-selected {
    background: #1e2028;
}
.layer-name {
    flex: 1;
}
.layer-selected .layer-name {
    color: #f0f0f0;
}
.icon-line {
    width: 12px;
    height: 12px;
    margin-right: 5px;
}
.layer-btn {
    margin-left: 5px;
}
.icon-layer {
    width: 13px;
    height: 13px;
}
.editor {
    flex: none;
    width: 370px;
    overflow: hidden;
}
.editor-head {
    display: flex;
    align-items: center;
    justify-content: space-between;
    height: 37px;
    padding: 0 14px 0 6px;
}
.editor-head h1 {
    margin: 0;
    font-size: 18px;
    font-weight: 600;
}
.icon-more {
    width: 20px;
    height: 20px;
}
.group-head {
    display: flex;
    align-items: center;
    justify-content: space-between;
    width: 100%;
    height: 32px;
    padding: 0 9px 0 5px;
    border-top: 1px solid #36383e;
    background: #1e2028;
    font-size: 14px;
    font-weight: 600;
}
.icon-down {
    width: 13px;
    height: 13px;
}
.group {
    display: flex;
    flex-direction: column;
    gap: 10px;
    padding: 10px;
}
.group-filter,
.group-paint {
    gap: 20px;
}
.row {
    display: flex;
    height: 24px;
}
.row:has(.textarea) {
    height: 78px;
}
.row label,
.label {
    flex: 1;
    line-height: 24px;
    color: #a4a4a4;
}
.input,
.static,
.zoom,
.field,
.color-field {
    flex: none;
    width: 50%;
    height: 24px;
}
.input {
    margin: 0;
    padding: 0 5px;
    border: 0;
    border-radius: 0;
    background-color: #222429;
    color: #c4c4c4;
}
.input::placeholder {
    color: #6b6c70;
}
.static {
    padding: 0 5px;
    line-height: 24px;
    color: #c4c4c4;
}
.textarea {
    height: 78px;
    padding: 7px 5px;
    font-family: "DejaVu Sans Mono", monospace;
    resize: vertical;
}
.select-filter {
    color: #f0f0f0;
}
.zoom {
    display: flex;
    align-items: center;
    gap: 6px;
}
.zoom input[type="range"] {
    flex: 1;
    min-width: 0;
}
.zoom .input {
    width: 51px;
}
.color-field {
    display: flex;
    height: 26px;
}
.color-field .input {
    flex: 1;
    width: auto;
    min-width: 0;
    height: 26px;
}
.swatch {
    flex: none;
    width: 14px;
    background: #000;
}
.tools {
    display: flex;
    align-items: flex-start;
    gap: 6px;
    padding: 1px 6px 0 0;
    color: #a4a4a4;
}
.icon-tool {
    width: 13px;
    height: 13px;
}
.icon-add {
    width: 14px;
    height: 14px;
    margin-right: 3px;
}
.row-off label,
.row-off .label {
    color: #606164;
}
.row-off .tools {
    color: #57585c;
}
.row-off .tool-on {
    color: #a4a4a4;
}
.row-off .input {
    background-color: #1e1f23;
}

/* map */
.map {
    flex: 1;
    min-width: 0;
    display: grid;
    background: #fff;
}
.map-canvas,
.search {
    grid-area: 1 / 1;
}
.map-canvas {
    width: 100%;
    height: 100%;
    min-height: 0;
}
/* border paths are drawn at three units to the pixel */
.gemeente,
.provincie,
.land {
    fill: none;
    stroke-linejoin: round;
}
.gemeente {
    stroke: #000;
    stroke-width: 4px;
}
.provincie {
    stroke: #ff0019;
    stroke-width: 7px;
}
.land {
    stroke: #1a00e8;
    stroke-width: 7px;
}
.search {
    align-self: start;
    justify-self: start;
    display: flex;
    align-items: center;
    width: 240px;
    height: 36px;
    margin: 10px;
    padding: 0 9px 0 7px;
    border-radius: 4px;
    background: #fff;
    box-shadow: 0 0 10px 2px rgba(0, 0, 0, .1);
    color: #757575;
}
.icon-search {
    width: 20px;
    height: 20px;
}
.search-input {
    flex: 1;
    min-width: 0;
    padding: 0 0 0 8px;
    border: 0;
    background: none;
    color: #404040;
    font-family: "Liberation Sans", sans-serif;
    font-size: 15px;
}
.icon-clear {
    width: 14px;
    height: 14px;
    stroke: currentColor;
    stroke-width: 2px;
}
```
